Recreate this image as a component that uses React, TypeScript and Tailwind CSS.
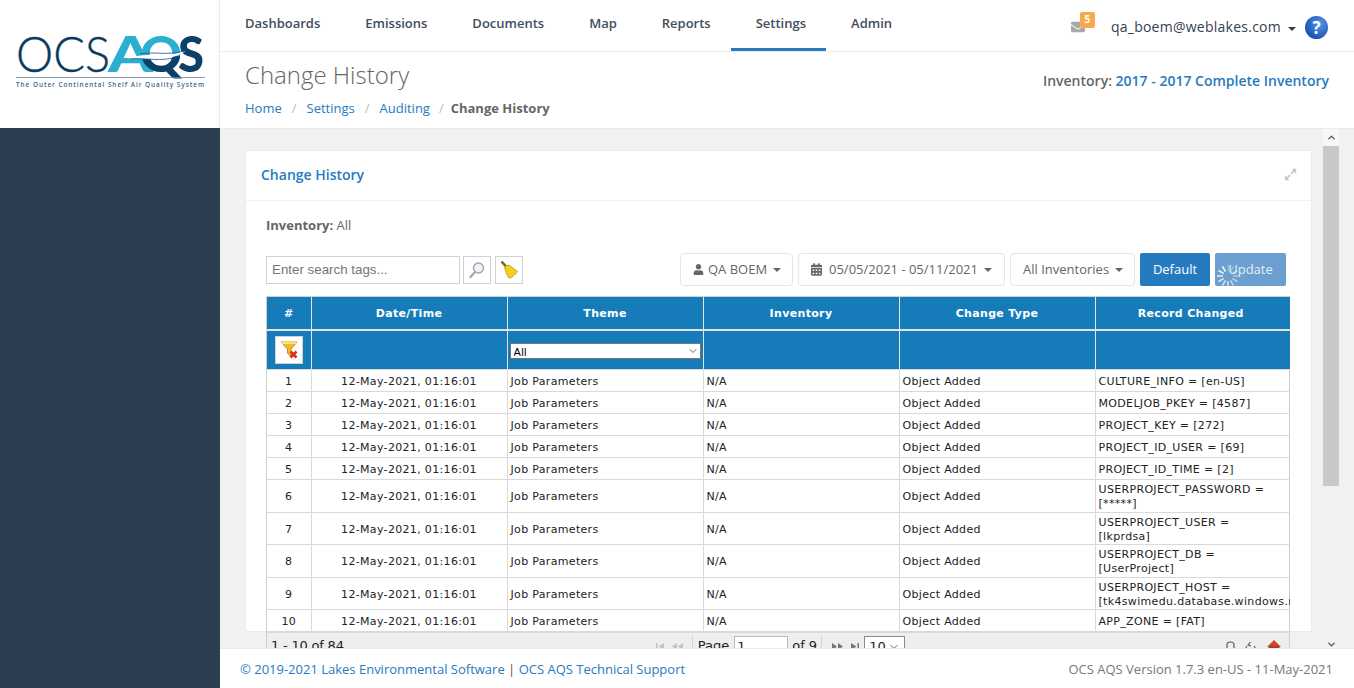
import { ChevronDown, ChevronUp } from 'lucide-react'
import { FaCalendarAlt, FaEnvelope, FaExpandAlt, FaUser } from 'react-icons/fa'

const navItems = ['Dashboards', 'Emissions', 'Documents', 'Map', 'Reports', 'Settings', 'Admin']

const rows = [
  { id: 1, record: 'CULTURE_INFO = [en-US]', h: 'h-[22px]' },
  { id: 2, record: 'MODELJOB_PKEY = [4587]', h: 'h-[22px]' },
  { id: 3, record: 'PROJECT_KEY = [272]', h: 'h-[22px]' },
  { id: 4, record: 'PROJECT_ID_USER = [69]', h: 'h-[22px]' },
  { id: 5, record: 'PROJECT_ID_TIME = [2]', h: 'h-[22px]' },
  { id: 6, record: 'USERPROJECT_PASSWORD = [*****]', h: 'h-[33px]' },
  { id: 7, record: 'USERPROJECT_USER = [lkprdsa]', h: 'h-[32px]' },
  { id: 8, record: 'USERPROJECT_DB = [UserProject]', h: 'h-[33px]' },
  { id: 9, record: 'USERPROJECT_HOST = [tk4swimedu.database.windows.net]', h: 'h-[32px]' },
  { id: 10, record: 'APP_ZONE = [FAT]', h: 'h-[22px]' },
]

const Caret = () => <span className="ml-[6px] inline-block border-x-[4px] border-t-[4px] border-x-transparent border-t-current" />

const Logo = () => (
  <svg width="200" height="60" viewBox="0 0 200 60" className="block">
    <defs>
      <linearGradient id="q" x1="0" y1="0" x2="0" y2="1">
        <stop offset="0.55" stopColor="#2bafd0" />
        <stop offset="0.55" stopColor="#0b4068" />
      </linearGradient>
    </defs>
    <text x="0" y="38" fontFamily="Lato" fontWeight="300" fontSize="49" fill="#0b3a5c" stroke="#0b3a5c" strokeWidth="0.4" textLength="94" lengthAdjust="spacingAndGlyphs">OCS</text>
    <text x="92" y="38" fontFamily="Lato" fontWeight="900" fontSize="50" fill="#2bafd0" textLength="45" lengthAdjust="spacingAndGlyphs">A</text>
    <text x="124" y="38" fontFamily="Lato" fontWeight="900" fontSize="50" fill="url(#q)" textLength="42" lengthAdjust="spacingAndGlyphs">Q</text>
    <text x="162" y="38" fontFamily="Lato" fontWeight="900" fontSize="50" fill="#0b4068" textLength="26" lengthAdjust="spacingAndGlyphs">S</text>
    <path d="M112 25 C128 17 146 25 170 17 C152 29 130 24 112 25Z" fill="#fff" />
    <path d="M124 20 C138 17 150 22 168 17" fill="none" stroke="#1c4f9c" strokeWidth="0.8" />
    <path d="M114 25 C128 23 145 29 164 22" fill="none" stroke="#1c4f9c" strokeWidth="0.8" />
    <rect x="0" y="43" width="189" height="0.8" fill="#6d88a0" />
    <text x="0" y="53" fontFamily="Open Sans" fontWeight="600" fontSize="6.4" fill="#3d6483" textLength="188">The Outer Continental Shelf Air Quality System</text>
  </svg>
)

const SearchGlass = () => (
  <svg width="18" height="18" viewBox="0 0 18 18">
    <circle cx="10.5" cy="7" r="5" fill="#eef3f8" stroke="#9aa7b5" strokeWidth="1.4" />
    <path d="M7 11 L2.5 16" stroke="#a8a8a8" strokeWidth="2.4" strokeLinecap="round" />
  </svg>
)

const Broom = () => (
  <svg width="20" height="20" viewBox="0 0 20 20">
    <path d="M2.5 1.5 L7.5 7" stroke="#8f5a1e" strokeWidth="2.6" />
    <path d="M5.5 6.5 L10 5 L18.5 11.5 C16 15 12.5 18 10 18 C8 15 6 10.5 5.5 6.5Z" fill="#f2d21e" stroke="#b8960f" strokeWidth="0.8" />
  </svg>
)

const FilterClear = () => (
  <svg width="18" height="19" viewBox="0 0 18 19">
    <path d="M1 2 H17 L11 9 V17 L7.5 13 V9Z" fill="#f5bd1f" stroke="#a87a0a" strokeWidth="0.8" />
    <path d="M1.5 2 H16.5 V4 H1.5Z" fill="#f9e08a" />
    <path d="M10.5 11.5 L16.5 17.5 M16.5 11.5 L10.5 17.5" stroke="#dd2b20" strokeWidth="2.6" />
  </svg>
)

const Spinner = () => (
  <svg width="24" height="24" viewBox="0 0 24 24" className="absolute left-[1px] top-[11px]">
    {Array.from({ length: 12 }).map((_, i) => (
      <rect key={i} x="11.2" y="1" width="1.6" height="6" fill="#fff" opacity={0.25 + i * 0.06} transform={`rotate(${i * 30} 12 12)`} />
    ))}
  </svg>
)

// pager arrows, flipped for the "next" side
const PagerArrows = ({ color, flip }: { color: string; flip?: boolean }) => (
  <svg width="32" height="9" viewBox="0 0 32 9" className={flip ? '-scale-x-100' : ''} fill={color}>
    <rect x="1" y="1" width="1.5" height="7" />
    <path d="M9 1 V8 L3.5 4.5Z" />
    <path d="M22 1 V8 L17 4.5Z" />
    <path d="M28 1 V8 L23 4.5Z" />
  </svg>
)

const PagerTools = () => (
  <svg width="56" height="18" viewBox="0 0 56 18" fill="none">
    <path d="M1 14 V5 Q1 2 4.5 2 Q8 2 8 5 V14" stroke="#555" strokeWidth="1.2" />
    <path d="M21 6 A4.5 4.5 0 1 0 28 6 M24.5 2 L22 5 L25 6" stroke="#555" strokeWidth="1.1" />
    <path d="M48 0 L55 7 H41Z" fill="#d8432e" />
    <path d="M43 7 H53 V16 H43Z" fill="#e8604a" stroke="#7a2a20" strokeWidth="0.8" />
    <path d="M46 7 V16 M50 7 V16" stroke="#7a2a20" strokeWidth="0.8" />
  </svg>
)

const App = () => {
  return (
    <div className="flex h-[688px] w-[1354px] overflow-hidden bg-white font-['Open_Sans',sans-serif] text-[13px] text-[#555]">
      {/* Sidebar */}
      <aside className="flex w-[220px] shrink-0 flex-col border-r border-[#e7ecf1]">
        <div className="flex h-[128px] items-start bg-white pl-[16px] pt-[34px]">
          <Logo />
        </div>
        <div className="-mr-[1px] flex-1 bg-[#2c3e50]" />
      </aside>

      <main className="flex min-w-0 flex-1 flex-col">
        {/* Top nav */}
        <div className="flex h-[52px] shrink-0 items-stretch justify-between border-b border-[#e7ecf1]">
          <nav className="flex h-[51px]">
            {navItems.map((item) => (
              <a
                key={item}
                className={`flex items-center pl-[25px] pr-[20px] text-[13px] font-semibold text-[#3f4e5c] ${
                  item === 'Settings' ? 'border-b-[3px] border-[#267ac0] pb-[1px]' : 'pb-[4px]'
                }`}
              >
                {item}
              </a>
            ))}
          </nav>
          <div className="flex items-center pr-[26px] pt-[2px]">
            <div className="relative mr-[26px] h-[16px] w-[14px]">
              <FaEnvelope className="absolute left-0 top-[1px] h-[14px] w-[14px] text-[#a8a8a8]" />
              <span className="absolute -top-[7px] left-[9px] flex h-[16px] w-[15px] items-center justify-center rounded-[2px] bg-[#f8a94f] text-[10px] font-bold text-white">
                5
              </span>
            </div>
            <span className="text-[14px] tracking-[0.25px] text-[#34414f]">qa_boem@weblakes.com</span>
            <span className="ml-[1px] text-[#34414f]"><Caret /></span>
            <span className="ml-[9px] mt-[2px] flex h-[23px] w-[23px] items-center justify-center rounded-full bg-[radial-gradient(circle_at_65%_35%,#5b93e6,#1a56b8_70%,#123f8f)] text-[17px] font-bold text-white">
              ?
            </span>
          </div>
        </div>

        {/* Page title */}
        <div className="flex h-[77px] shrink-0 justify-between border-b border-[#e7ecf1] px-[25px]">
          <div>
            <h1 className="mt-[6px] text-[24px] font-light leading-[33px] text-[#666]">Change History</h1>
            <div className="mt-[8px] flex items-center text-[13px]">
              <a className="text-[#267ac0]">Home</a>
              <span className="mx-[10px] text-[#bbb]">/</span>
              <a className="text-[#267ac0]">Settings</a>
              <span className="mx-[10px] text-[#bbb]">/</span>
              <a className="text-[#267ac0]">Auditing</a>
              <span className="ml-[9px] mr-[7px] text-[#bbb]">/</span>
              <span className="font-bold text-[#666]">Change History</span>
            </div>
          </div>
          <div className="mt-[18px] text-[14px] font-semibold text-[#666]">
            Inventory: <a className="text-[#267ac0]">2017 - 2017 Complete Inventory</a>
          </div>
        </div>

        {/* Scroll body */}
        <div className="flex min-h-0 flex-1 bg-[#f1f1f1]">
          <div className="min-w-0 flex-1 overflow-hidden pl-[25px] pr-[11px] pt-[21px]">
            <section className="h-[482px] rounded-[2px] border border-[#e7ecf1] bg-white">
              <div className="flex h-[50px] items-center justify-between border-b border-[#eef1f5] pb-[2px] pl-[15px] pr-[14px]">
                <span className="text-[14px] font-semibold text-[#267ac0]">Change History</span>
                <FaExpandAlt className="h-[13px] w-[13px] text-[#c8c8c8]" />
              </div>
              <div className="pl-[20px] pr-[21px] pt-[14px]">
                <p className="h-[20px] leading-[20px] text-[#666]">
                  <b className="font-bold">Inventory:</b> All
                </p>
                <div className="mt-[18px] flex items-center justify-between pr-[4px]">
                  <div className="flex items-center">
                    <input
                      readOnly
                      placeholder="Enter search tags..."
                      className="h-[28px] w-[194px] border border-[#d2d2d2] bg-white px-[5px] font-['Liberation_Sans',sans-serif] text-[13.33px] placeholder:text-[#757575]"
                    />
                    <button className="ml-[3px] flex h-[28px] w-[28px] items-center justify-center border border-[#d2d2d2] bg-white">
                      <SearchGlass />
                    </button>
                    <button className="ml-[4px] flex h-[28px] w-[28px] items-center justify-center border border-[#d2d2d2] bg-white">
                      <Broom />
                    </button>
                  </div>
                  <div className="flex items-center gap-[5px]">
                    <button className="flex h-[33px] w-[113px] items-center rounded-[4px] border border-[#e5e5e5] bg-white pl-[12px] text-[#666]">
                      <FaUser className="mr-[4px] h-[11px] w-[11px]" />
                      QA BOEM
                      <Caret />
                    </button>
                    <button className="flex h-[33px] w-[207px] items-center rounded-[4px] border border-[#e5e5e5] bg-white pl-[12px] text-[#666]">
                      <FaCalendarAlt className="mr-[7px] h-[13px] w-[11px]" />
                      05/05/2021 - 05/11/2021
                      <Caret />
                    </button>
                    <button className="flex h-[33px] w-[125px] items-center rounded-[4px] border border-[#e5e5e5] bg-white pl-[12px] text-[#666]">
                      All Inventories
                      <Caret />
                    </button>
                    <button className="h-[33px] w-[70px] rounded-[2px] bg-[#267ac0] text-white">Default</button>
                    <button className="relative h-[33px] w-[71px] rounded-[2px] bg-[#6a9fcf] text-[#e6eef6]">
                      Update
                      <Spinner />
                    </button>
                  </div>
                </div>

                <div className="mt-[10px] border-x border-t border-[#cfcfcf] font-['DejaVu_Sans',sans-serif] text-[11px] tracking-[0.33px] text-[#222]">
                  <table className="w-[1023px] table-fixed border-collapse">
                    <colgroup>
                      <col className="w-[44px]" />
                      <col className="w-[196px]" />
                      <col className="w-[196px]" />
                      <col className="w-[196px]" />
                      <col className="w-[196px]" />
                      <col className="w-[195px]" />
                    </colgroup>
                    <thead className="bg-[#167cb9] text-white">
                      <tr className="h-[33px] border-b-2 border-[#e4e4e4]">
                        {['#', 'Date/Time', 'Theme', 'Inventory', 'Change Type', 'Record Changed'].map((h) => (
                          <th key={h} className="border-l border-[#e4e4e4] pt-[2px] text-center text-[11px] font-bold first:border-l-0 last:pr-[4px]">
                            {h}
                          </th>
                        ))}
                      </tr>
                      <tr className="h-[39px] border-b border-[#d9d9d9]">
                        <th className="pl-[8px] text-left">
                          <button className="flex h-[28px] w-[28px] items-center justify-center border border-[#d2d2d2] bg-white">
                            <FilterClear />
                          </button>
                        </th>
                        <th className="border-l border-[#e4e4e4]" />
                        <th className="border-l border-[#e4e4e4] pl-[2px] pt-[2px]">
                          <div className="relative h-[16px] w-[191px]">
                            <select className="block h-[16px] w-full appearance-none border border-[#767676] bg-white pl-[3px] font-['Liberation_Sans',sans-serif] text-[11px] font-normal text-black">
                              <option>All</option>
                            </select>
                            <ChevronDown className="absolute right-[2px] top-[2px] h-[12px] w-[12px] text-[#222]" strokeWidth={1.4} />
                          </div>
                        </th>
                        <th className="border-l border-[#e4e4e4]" />
                        <th className="border-l border-[#e4e4e4]" />
                        <th className="border-l border-[#e4e4e4]" />
                      </tr>
                    </thead>
                    <tbody className="leading-[15px]">
                      {rows.map((row) => (
                        <tr key={row.id} className={`${row.h} border-b border-[#d9d9d9]`}>
                          <td className="pt-[2px] text-center">{row.id}</td>
                          <td className="border-l border-[#d9d9d9] pt-[2px] text-center">12-May-2021, 01:16:01</td>
                          <td className="border-l border-[#d9d9d9] px-[3px] pt-[2px]">Job Parameters</td>
                          <td className="border-l border-[#d9d9d9] px-[3px] pt-[2px]">N/A</td>
                          <td className="border-l border-[#d9d9d9] px-[3px] pt-[2px]">Object Added</td>
                          <td className="overflow-hidden border-l border-[#d9d9d9] pl-[3px] pr-[10px] pt-[3px] leading-[14px]">{row.record}</td>
                        </tr>
                      ))}
                    </tbody>
                  </table>
                  <div className="flex h-[30px] items-start border-t border-[#d9d9d9] bg-[#eeeeee] pl-[4px] pr-[7px] pt-[3px] tracking-normal text-[#222]">
                    <span className="mt-[1px] text-[13px] leading-[18px] tracking-[-0.2px]">1 - 10 of 84</span>
                    <div className="ml-[311px] flex items-start">
                      <span className="mt-[6px]"><PagerArrows color="#c2c2c2" /></span>
                      <span className="ml-[5px] border-l border-[#d4d4d4] pl-[5px] text-[13px] leading-[20px]">Page</span>
                      <span className="ml-[5px] h-[22px] w-[54px] border border-[#bbb] bg-white pl-[2px] text-[13px] leading-[20px]">1</span>
                      <span className="ml-[4px] border-r border-[#d4d4d4] pr-[4px] text-[13px] leading-[20px]">of 9</span>
                      <span className="ml-[6px] mt-[6px]"><PagerArrows color="#777" flip /></span>
                      <span className="ml-[4px] flex h-[22px] w-[41px] items-start justify-between border border-[#8a8a8a] bg-white px-[4px] text-[13px] leading-[20px]">
                        10 <ChevronDown className="mt-[4px] h-[12px] w-[12px]" strokeWidth={1.5} />
                      </span>
                    </div>
                    <div className="ml-auto mt-[4px]">
                      <PagerTools />
                    </div>
                  </div>
                </div>
              </div>
            </section>
          </div>

          {/* Scrollbar */}
          <div className="flex w-[16px] shrink-0 flex-col items-center">
            <div className="flex h-[17px] w-full items-center justify-center bg-[#f7f7f7]">
              <ChevronUp className="h-[11px] w-[11px] text-[#555]" strokeWidth={3} />
            </div>
            <div className="h-[340px] w-full bg-[#c8c8c8]" />
            <div className="flex-1" />
            <div className="flex h-[8px] w-full items-center justify-center">
              <ChevronDown className="h-[11px] w-[11px] shrink-0 text-[#555]" strokeWidth={3} />
            </div>
          </div>
          <div className="w-[15px] shrink-0" />
        </div>

        {/* Footer */}
        <footer className="flex h-[40px] shrink-0 items-center justify-between border-t border-[#e7ecf1] bg-white pl-[20px] pr-[21px] pt-[2px] text-[13px]">
          <div className="text-[#267ac0]">
            <a>© 2019-2021 Lakes Environmental Software</a> <span className="text-[#555]">|</span> <a>OCS AQS Technical Support</a>
          </div>
          <div className="text-[#777]">OCS AQS Version 1.7.3 en-US - 11-May-2021</div>
        </footer>
      </main>
    </div>
  )
}

export default App
